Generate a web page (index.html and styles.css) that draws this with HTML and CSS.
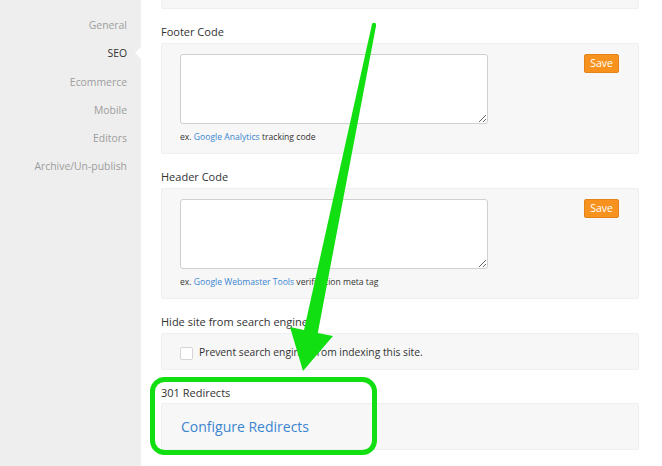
FILE: index.html
```html
<!DOCTYPE html>
<html>
<head>
<meta charset="utf-8">
<link rel="stylesheet" href="styles.css">
</head>
<body>
<div class="page">
  <nav class="sidebar">
    <a class="nav-item">General</a>
    <a class="nav-item active">SEO</a>
    <a class="nav-item">Ecommerce</a>
    <a class="nav-item">Mobile</a>
    <a class="nav-item">Editors</a>
    <a class="nav-item">Archive/Un-publish</a>
  </nav>
  <main class="main">
    <div class="panel stub"></div>

    <div class="label">Footer Code</div>
    <div class="panel code-panel">
      <div class="code-col">
        <textarea class="code-input"></textarea>
        <div class="hint">ex. <a class="link">Google Analytics</a> tracking code</div>
      </div>
      <button class="save">Save</button>
    </div>

    <div class="label">Header Code</div>
    <div class="panel code-panel">
      <div class="code-col">
        <textarea class="code-input"></textarea>
        <div class="hint">ex. <a class="link">Google Webmaster Tools</a> verification meta tag</div>
      </div>
      <button class="save">Save</button>
    </div>

    <div class="label">Hide site from search engines</div>
    <div class="panel check-panel">
      <span class="checkbox"></span>
      <span class="check-text">Prevent search engines from indexing this site.</span>
    </div>

    <div class="label label-redirect">301 Redirects</div>
    <div class="panel redirect-panel">
      <a class="redirect-link">Configure Redirects</a>
    </div>
  </main>

  <svg class="annotation" width="662" height="466" viewBox="0 0 662 466">
    <rect x="152.5" y="379.5" width="222" height="73" rx="12" ry="12" fill="none" stroke="#12df12" stroke-width="5"/>
    <circle cx="374" cy="25" r="2.2" fill="#12df12"/>
    <polygon fill="#12df12" points="371.9,24.6 376.1,25.4 317.8,332.9 333,336 303,371 290,327 304,330.1"/>
  </svg>
</div>
</body>
</html>
```

FILE: styles.css
```css
* { box-sizing: border-box; }

html, body {
  margin: 0;
  padding: 0;
  background: #ffffff;
}

body {
  font-family: "Open Sans", "DejaVu Sans", sans-serif;
  color: #333333;
}

.page {
  position: relative;
  display: flex;
  width: 662px;
  height: 466px;
  overflow: hidden;
}

.sidebar {
  width: 141px;
  flex: 0 0 141px;
  background: #eeeeee;
  display: flex;
  flex-direction: column;
  align-items: flex-end;
  padding-top: 16px;
  padding-right: 14px;
}

.nav-item {
  position: relative;
  display: block;
  font-size: 10.4px;
  line-height: 18px;
  height: 28.3px;
  color: #9d9d9d;
  white-space: nowrap;
}

.nav-item.active {
  color: #333333;
}

.nav-item.active::after {
  content: "";
  position: absolute;
  right: -14px;
  top: 3px;
  width: 0;
  height: 0;
  border-top: 6px solid transparent;
  border-bottom: 6px solid transparent;
  border-right: 6px solid #ffffff;
}

.main {
  flex: 1;
  padding: 0 23px 0 20px;
  display: flex;
  flex-direction: column;
}

.panel {
  background: #f7f7f7;
  border: 1px solid #efefef;
  border-radius: 2px;
}

.stub {
  height: 9px;
  border-top: none;
}

.label {
  font-size: 11px;
  line-height: 16px;
  margin-top: 15px;
  margin-bottom: 3px;
  color: #333333;
}

.label-redirect {
  margin-bottom: 2px;
}

.code-panel {
  display: flex;
  align-items: flex-start;
  padding: 10px 19px 9px 18px;
}

.code-col {
  display: flex;
  flex-direction: column;
}

.code-input {
  display: block;
  width: 308px;
  height: 70px;
  margin: 0;
  border: 1px solid #cfcfcf;
  border-radius: 3px;
  background: #ffffff;
  resize: both;
}

.hint {
  margin-top: 6px;
  font-size: 8.6px;
  line-height: 14px;
  color: #333333;
}

.link {
  color: #3a85d0;
}

.save {
  margin-left: auto;
  width: 35px;
  height: 19px;
  padding: 0;
  font-family: "Open Sans", "DejaVu Sans", sans-serif;
  font-size: 10.5px;
  line-height: 17px;
  color: #ffffff;
  background: #f7921e;
  border: 1px solid #e2841a;
  border-radius: 2px;
}

.check-panel {
  height: 37px;
  display: flex;
  align-items: center;
  padding-left: 18px;
}

.checkbox {
  display: block;
  width: 13px;
  height: 13px;
  background: #ffffff;
  border: 1px solid #d5d5d5;
  border-radius: 2px;
  margin-top: 3px;
}

.check-text {
  margin-left: 6px;
  font-size: 10.3px;
  color: #333333;
}

.redirect-panel {
  height: 47px;
  display: flex;
  align-items: center;
  padding-left: 19px;
}

.redirect-link {
  font-size: 14px;
  color: #3a85d0;
}

.annotation {
  position: absolute;
  left: 0;
  top: 0;
  pointer-events: none;
}
```
